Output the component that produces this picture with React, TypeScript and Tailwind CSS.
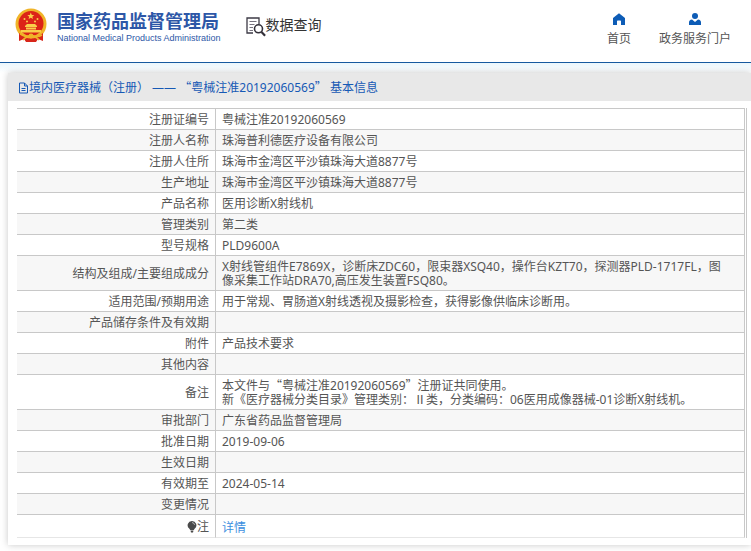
import type { ReactNode } from "react";

function Wide({ children }: { children: string }) {
  return <span className="font-['Noto_Sans_CJK_SC',sans-serif] leading-[0]">{children}</span>;
}

type Row = { label: string; value?: ReactNode };

const rows: Row[] = [
  { label: "注册证编号", value: "粤械注准20192060569" },
  { label: "注册人名称", value: "珠海普利德医疗设备有限公司" },
  { label: "注册人住所", value: "珠海市金湾区平沙镇珠海大道8877号" },
  { label: "生产地址", value: "珠海市金湾区平沙镇珠海大道8877号" },
  { label: "产品名称", value: "医用诊断X射线机" },
  { label: "管理类别", value: "第二类" },
  { label: "型号规格", value: "PLD9600A" },
  {
    label: "结构及组成/主要组成成分",
    value:
      "X射线管组件E7869X，诊断床ZDC60，限束器XSQ40，操作台KZT70，探测器PLD-1717FL，图像采集工作站DRA70,高压发生装置FSQ80。",
  },
  { label: "适用范围/预期用途", value: "用于常规、胃肠道X射线透视及摄影检查，获得影像供临床诊断用。" },
  { label: "产品储存条件及有效期" },
  { label: "附件", value: "产品技术要求" },
  { label: "其他内容" },
  {
    label: "备注",
    value: (
      <>
        本文件与<Wide>“</Wide>粤械注准20192060569<Wide>”</Wide>注册证共同使用。
        <br />
        新《医疗器械分类目录》管理类别：Ⅱ类，分类编码：06医用成像器械-01诊断X射线机。
      </>
    ),
  },
  { label: "审批部门", value: "广东省药品监督管理局" },
  { label: "批准日期", value: "2019-09-06" },
  { label: "生效日期" },
  { label: "有效期至", value: "2024-05-14" },
  { label: "变更情况" },
];

function Emblem() {
  return (
    <svg viewBox="0 0 32 35" className="h-[35px] w-8 shrink-0" aria-hidden="true">
      <circle cx="16" cy="16" r="15.5" fill="#f0b429" />
      <circle cx="16" cy="15.5" r="12.5" fill="#dc2418" />
      <path d="M4 25 Q16 36 28 25 L28 33 L23 31 L21 34 L11 34 L9 31 L4 33Z" fill="#d8261a" />
      <path d="M15.8 4.6l1 2.3 2.5.2-1.9 1.6.6 2.4-2.2-1.3-2.2 1.3.6-2.4-1.9-1.6 2.5-.2z" fill="#f9cf4a" />
      <g fill="#f9cf4a">
        <circle cx="9.5" cy="11" r="1" />
        <circle cx="12" cy="13.5" r="1" />
        <circle cx="20" cy="13.5" r="1" />
        <circle cx="22.5" cy="11" r="1" />
        <path d="M10 18l2-2h8l2 2v1H10zM11 19.5h10v2H11zM6 22h20v2.5H6z" />
      </g>
      <path d="M5 26q5 4 11 1q6 3 11 0M8 32q3-4 8-3q5-1 8 3" fill="none" stroke="#f0b429" strokeWidth="1.6" />
      <circle cx="16" cy="28" r="2.4" fill="#f0b429" />
    </svg>
  );
}

function SearchDocIcon() {
  return (
    <svg viewBox="0 0 20 20" className="mt-1 h-5 w-5 shrink-0" fill="none" aria-hidden="true">
      <path d="M7 16H1V1h12v6" stroke="#3d3a45" strokeWidth="1.3" />
      <path d="M3.5 4.5h7M3.5 7.5h5M3.5 10.5h3.5M3.5 13.5h3.5" stroke="#77737f" strokeWidth="1.2" />
      <circle cx="12.5" cy="11.8" r="4" fill="#fff" stroke="#333039" strokeWidth="1.6" />
      <path d="M15.5 15l3.6 3.7" stroke="#333039" strokeWidth="2.2" />
    </svg>
  );
}

export default function App() {
  return (
    <div className="overflow-hidden bg-white pb-2 font-['Noto_Sans','Noto_Sans_CJK_SC',sans-serif] text-xs text-[#555]">
      <header className="flex h-[63px] items-start border-b border-[#16599f]">
        <a href="#home" className="ml-[15px] flex items-start pt-2 text-[#2d57a7]">
          <Emblem />
          <span className="ml-2.5 flex flex-col pt-1">
            <span className="text-lg leading-[18px] font-bold whitespace-nowrap">国家药品监督管理局</span>
            <span className="font-['Liberation_Sans',sans-serif] text-[9px] leading-4 whitespace-nowrap">
              National Medical Products Administration
            </span>
          </span>
        </a>
        <a href="#query" className="ml-[25px] flex items-start pt-[13px] text-[#333]">
          <SearchDocIcon />
          <span className="text-sm leading-6 whitespace-nowrap">数据查询</span>
        </a>
        <nav className="mr-5 ml-auto flex gap-7 pt-[13px]">
          <a href="#index" className="flex flex-col items-center gap-1 leading-5">
            <svg viewBox="0 0 12 12" className="h-3 w-3" fill="#0d5cb6" aria-hidden="true">
              <path d="M6 .3L0 5v7h4V8.2q0-.7.7-.7h2.6q.7 0 .7.7V12h4V5z" />
            </svg>
            首页
          </a>
          <a href="#portal" className="flex flex-col items-center gap-1 leading-5">
            <svg viewBox="0 0 12 12" className="h-3 w-3" fill="#0d5cb6" aria-hidden="true">
              <circle cx="6" cy="3" r="3" />
              <path d="M0 12V9.5Q0 7 3 6.6L6 9l3-2.4q3 .4 3 2.9V12z" />
            </svg>
            政务服务门户
          </a>
        </nav>
      </header>

      <div className="bg-linear-to-b from-[#eaf6fc] to-white to-[10px] pt-2.5 pl-2">
        <main className="bg-white shadow-[0_0_7px_rgba(0,0,0,0.22)]">
          <h1 className="flex h-7 items-center bg-[#e8e8e8] pt-0.5 pl-2.5 text-xs font-normal text-[#1659b5]">
            <svg viewBox="0 0 11 12" className="h-3 w-[11px]" fill="none" stroke="#1659b5" aria-hidden="true">
              <path d="M1.5 1h5l3 3v7h-8zM6.5 1v3h3M3.5 6.5h4M3.5 8.5h4" />
            </svg>
            <span className="whitespace-pre">
              境内医疗器械（注册） —— <Wide>“</Wide>粤械注准20192060569<Wide>”</Wide> 基本信息
            </span>
          </h1>
          <div className="pt-[7px] pr-1 pb-[7px] pl-[9px]">
            <div className="border-r border-[#c8c8c8] pr-px">
              <table className="w-full table-fixed border-separate border-spacing-0 border-t border-[#c8c8c8] leading-[14px]">
                <colgroup>
                  <col className="w-[199px]" />
                  <col />
                </colgroup>
                <tbody>
                  {rows.map((row) => (
                    <tr key={row.label} className="even:bg-[#f7f7f7]">
                      <th scope="row" className="h-[21px] border-r border-b border-[#c8c8c8] px-1.5 pt-1 pb-0.5 text-right font-normal">
                        {row.label}
                      </th>
                      <td className="border-r border-b border-[#c8c8c8] pt-1 pr-4 pb-0.5 pl-1.5">{row.value}</td>
                    </tr>
                  ))}
                  <tr>
                    <th scope="row" className="h-[23px] border-r border-b border-r-[#c8c8c8] border-b-[#e6e6e6] px-1.5 pt-[5px] pb-[3px] text-right font-normal">
                      <span className="flex items-center justify-end">
                        <svg viewBox="0 0 10 12" className="h-3 w-2.5" fill="#4a4a4a" aria-hidden="true">
                          <path d="M5 0a4.3 4.3 0 0 1 2.8 7.6L6.8 9H3.2l-1-1.4A4.3 4.3 0 0 1 5 0zM3.5 9.6h3L6 11.5H4z" />
                          <path d="M5 1.5q2.2.2 2.6 2.4" fill="none" stroke="#ddd" strokeWidth=".7" />
                        </svg>
                        注
                      </span>
                    </th>
                    <td className="border-r border-b border-r-[#c8c8c8] border-b-[#e6e6e6] pt-1.5 pr-4 pb-0.5 pl-1.5">
                      <a href="#detail" className="text-[#3d8fe0]">
                        详情
                      </a>
                    </td>
                  </tr>
                </tbody>
              </table>
            </div>
          </div>
        </main>
      </div>
    </div>
  );
}
